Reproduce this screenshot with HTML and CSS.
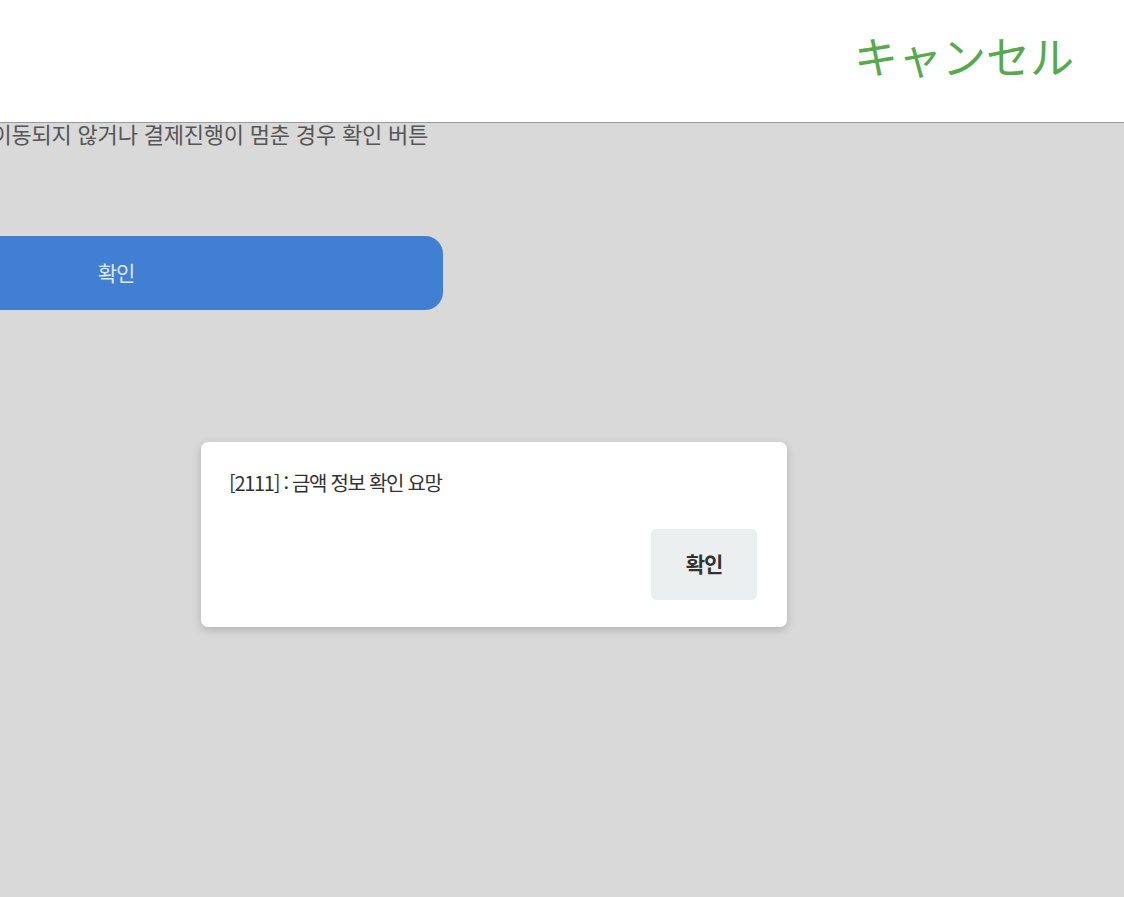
FILE: index.html
```html
<!DOCTYPE html>
<html lang="ko">

<head>
    <meta charset="UTF-8">
    <meta name="viewport" content="width=device-width, initial-scale=1.0">
    <title>결제 확인</title>
    <link rel="stylesheet" href="styles.css">
</head>

<body>

    <!-- Header -->
    <header class="top-bar">
        <button class="cancel-btn" type="button">キャンセル</button>
    </header>

    <!-- Content -->
    <main class="content">
        <p class="guide">이동되지 않거나 결제진행이 멈춘 경우 확인 버튼</p>
        <button class="confirm-btn" type="button">확인</button>
    </main>

    <!-- Alert dialog -->
    <div class="dialog">
        <p class="dialog-msg">[2111] : 금액 정보 확인 요망</p>
        <div class="dialog-actions">
            <button class="dialog-btn" type="button">확인</button>
        </div>
    </div>

</body>

</html>
```

FILE: styles.css
```css
/* Basis */
html,
body {
    margin: 0;
    padding: 0;
    height: 100%;
    overflow: hidden;
    background-color: #d9d9d9;
    font-family: "Noto Sans CJK KR", "Noto Sans", sans-serif;
}

button {
    font-family: inherit;
    border: none;
    cursor: pointer;
}

/* Header */
.top-bar {
    height: 122px;
    background: #fff;
    border-bottom: 1px solid #9a9a9a;
    display: flex;
    justify-content: flex-end;
    align-items: center;
    padding-right: 50px;
}

.cancel-btn {
    background: none;
    padding: 0;
    margin-top: -13px;
    font-family: "Noto Sans CJK JP", sans-serif;
    font-size: 44px;
    color: #56aa4e;
}

/* Content */
.content {
    width: 654px;
    margin-left: -211px;
    display: flex;
    flex-direction: column;
}

.guide {
    margin: -3px 0 0;
    text-align: right;
    padding-right: 15px;
    font-size: 22px;
    line-height: 26px;
    letter-spacing: -0.2px;
    color: #555;
    white-space: nowrap;
}

.confirm-btn {
    margin-top: 90px;
    height: 74px;
    border-radius: 18px;
    background: #417fd3;
    color: #dfe6f2;
    font-size: 21px;
    letter-spacing: -1px;
    padding-bottom: 3px;
}

/* Dialog */
.dialog {
    position: absolute;
    left: 201px;
    top: 442px;
    width: 586px;
    height: 185px;
    box-sizing: border-box;
    padding: 27px 30px 27px 28px;
    background: #fff;
    border-radius: 7px;
    box-shadow: 0 3px 10px rgba(0, 0, 0, 0.18);
    display: flex;
    flex-direction: column;
    justify-content: space-between;
}

.dialog-msg {
    margin: 0;
    font-size: 20px;
    line-height: 28px;
    letter-spacing: -1.3px;
    color: #333;
}

.dialog-actions {
    display: flex;
    justify-content: flex-end;
}

.dialog-btn {
    width: 106px;
    height: 71px;
    border-radius: 5px;
    background: #eceff0;
    color: #333;
    font-size: 21px;
    font-weight: bold;
    letter-spacing: -1px;
    padding-bottom: 4px;
}
```
